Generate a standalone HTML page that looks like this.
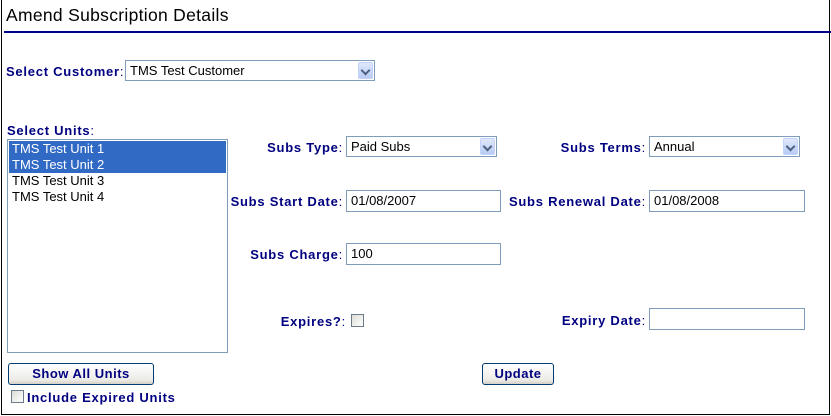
<!DOCTYPE html>
<html><head><style>
*{margin:0;padding:0;box-sizing:border-box}
body{width:831px;height:416px;background:#fff;position:relative;overflow:hidden;font-family:"Liberation Sans",Arial,sans-serif}
.frame{position:absolute;left:1px;top:0;width:829px;height:415px;border:1px solid #000;border-top:none}
.a{position:absolute}
.title{left:6px;top:5px;font-size:17.5px;letter-spacing:0.3px;color:#000}
.hr{left:4px;top:31px;width:827px;height:2px;background:#00008b}
.lbl{font-size:13px;font-weight:bold;color:#000080;white-space:nowrap;letter-spacing:0.75px}
.lbl span{font-weight:normal}
.r{text-align:right}
.box{border:1px solid #7f9db9;background:#fff;font-size:13px;color:#000;padding-left:4px;line-height:19px}
.arr{position:absolute;right:1px;top:1px;width:15px;height:17px;background:linear-gradient(#dfe8fb,#b8cbf2);border:1px solid #c3d3fd;border-radius:2px}
.arr:after{content:"";position:absolute;left:3px;top:4px;width:5px;height:5px;border-right:2px solid #4d6185;border-bottom:2px solid #4d6185;transform:rotate(45deg)}
.cb{width:13px;height:13px;border:1px solid #6c7b8b;background:linear-gradient(135deg,#dcdcd7,#fff)}
.btn{border:1px solid #003c74;border-radius:3px;background:linear-gradient(#fff,#ecebe6 80%,#d6d0c5);font-size:13px;font-weight:bold;color:#000080;text-align:center;line-height:19px;letter-spacing:0.5px}
.opt{font-size:13px;height:16px;line-height:16px;padding-left:3px}
.sel{background:#316ac5;color:#fff}
</style></head><body>
<div class="frame"></div>
<div class="a title">Amend Subscription Details</div>
<div class="a hr"></div>

<div class="a lbl" style="left:6px;top:64px">Select Customer<span>:</span></div>
<div class="a box" style="left:125px;top:60px;width:250px;height:21px">TMS Test Customer<div class="arr"></div></div>

<div class="a lbl" style="left:7px;top:123px">Select Units<span>:</span></div>
<div class="a" style="left:7px;top:139px;width:221px;height:214px;border:1px solid #7f9db9;padding:1px">
<div class="opt sel">TMS Test Unit 1</div>
<div class="opt sel">TMS Test Unit 2</div>
<div class="opt">TMS Test Unit 3</div>
<div class="opt">TMS Test Unit 4</div>
</div>

<div class="a lbl r" style="right:488px;top:140px">Subs Type<span>:</span></div>
<div class="a box" style="left:346px;top:136px;width:151px;height:21px">Paid Subs<div class="arr"></div></div>
<div class="a lbl r" style="right:185px;top:140px">Subs Terms<span>:</span></div>
<div class="a box" style="left:649px;top:136px;width:151px;height:21px">Annual<div class="arr"></div></div>

<div class="a lbl r" style="right:488px;top:194px">Subs Start Date<span>:</span></div>
<div class="a box" style="left:346px;top:190px;width:155px;height:22px">01/08/2007</div>
<div class="a lbl r" style="right:185px;top:194px">Subs Renewal Date<span>:</span></div>
<div class="a box" style="left:649px;top:190px;width:156px;height:22px">01/08/2008</div>

<div class="a lbl r" style="right:488px;top:247px">Subs Charge<span>:</span></div>
<div class="a box" style="left:346px;top:243px;width:155px;height:22px">100</div>

<div class="a lbl r" style="right:485px;top:314px">Expires?<span>:</span></div>
<div class="a cb" style="left:351px;top:314px"></div>
<div class="a lbl r" style="right:185px;top:313px">Expiry Date<span>:</span></div>
<div class="a box" style="left:649px;top:308px;width:156px;height:22px"></div>

<div class="a btn" style="left:8px;top:363px;width:146px;height:22px">Show All Units</div>
<div class="a btn" style="left:482px;top:363px;width:72px;height:22px">Update</div>
<div class="a cb" style="left:11px;top:390px"></div>
<div class="a lbl" style="left:27px;top:390px">Include Expired Units</div>
</body></html>
